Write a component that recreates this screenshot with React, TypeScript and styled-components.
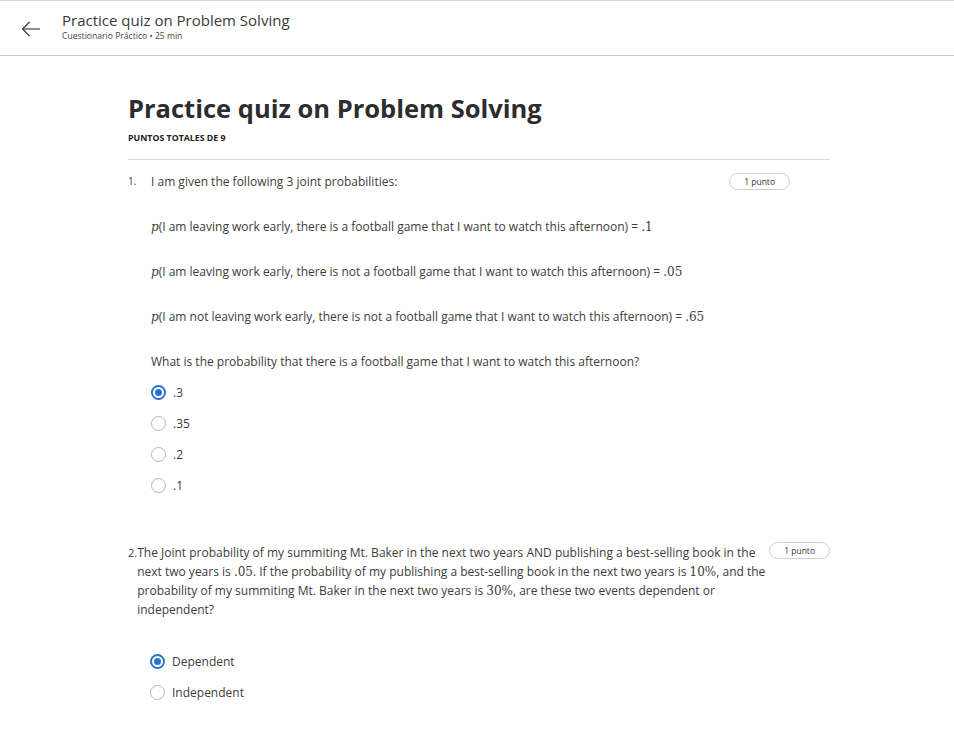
import React from "react";
import styled, { createGlobalStyle } from "styled-components";

const Global = createGlobalStyle`
  html, body { margin: 0; padding: 0; background: #fff; }
  body { font-family: "Open Sans", "Noto Sans", sans-serif; color: #373a3c; }
  * { box-sizing: border-box; }
`;

const Page = styled.div`
  width: 954px;
  min-height: 741px;
  background: #fff;
`;

const Header = styled.header`
  height: 56px;
  border-top: 1px solid #d9d9d9;
  border-bottom: 1px solid #c8c8c8;
  display: flex;
  align-items: center;
`;

const BackButton = styled.div`
  width: 62px;
  display: flex;
  justify-content: center;
  padding-top: 2px;
`;

const HeaderText = styled.div`
  display: flex;
  flex-direction: column;
  margin-top: -3px;
`;

const HeaderTitle = styled.div`
  font-size: 15px;
  color: #3a3a3a;
  line-height: 20px;
`;

const HeaderSub = styled.div`
  font-size: 8.6px;
  color: #444;
  line-height: 13px;
`;

const Main = styled.main`
  width: 702px;
  margin-left: 128px;
  padding-top: 34px;
`;

const Title = styled.h1`
  margin: 0;
  font-size: 25.5px;
  font-weight: 700;
  color: #2b2d2f;
  line-height: 36px;
`;

const Points = styled.div`
  margin-top: 6px;
  font-size: 8.8px;
  font-weight: 700;
  color: #222;
  line-height: 12px;
`;

const Divider = styled.hr`
  margin: 15px 0 0;
  border: none;
  border-top: 1px solid #dcdcdc;
`;

const Question = styled.section<{ $top: number }>`
  margin-top: ${(p) => p.$top}px;
`;

const QHead = styled.div<{ $right?: number }>`
  display: flex;
  align-items: flex-start;
  justify-content: space-between;
  padding-right: ${(p) => p.$right ?? 0}px;
`;

const QLabel = styled.div`
  display: flex;
  font-size: 12px;
  line-height: 19px;
  color: #3c3c3c;
`;

const QNum = styled.span<{ $w: number }>`
  flex: 0 0 ${(p) => p.$w}px;
  font-size: ${(p) => (p.$w > 15 ? 10 : 11)}px;
`;

const QText = styled.div<{ $w?: number }>`
  max-width: ${(p) => p.$w ?? 600}px;
`;

const Pill = styled.div<{ $mt: number }>`
  margin-top: ${(p) => p.$mt}px;
  height: 17px;
  padding: 0 14px;
  border: 1px solid #cfcfcf;
  border-radius: 9px;
  font-size: 8.5px;
  color: #333;
  display: flex;
  align-items: center;
  flex-shrink: 0;
`;

const Body = styled.div`
  padding-left: 23px;
`;

const Para = styled.p`
  margin: 26px 0 0;
  font-size: 12px;
  line-height: 19px;
  color: #3c3c3c;
`;

const M = styled.span`
  font-family: "DejaVu Serif", "Liberation Serif", serif;
  font-size: 12px;
  line-height: 1;
`;

const MI = styled(M)`
  font-style: italic;
`;

const Options = styled.div<{ $mt: number }>`
  margin-top: ${(p) => p.$mt}px;
  display: flex;
  flex-direction: column;
  gap: 12px;
`;

const Option = styled.label`
  display: flex;
  align-items: center;
  gap: 7px;
  height: 19px;
  font-size: 12px;
  color: #3c3c3c;
`;

const Radio = styled.span<{ $checked?: boolean }>`
  width: 15px;
  height: 15px;
  border-radius: 50%;
  border: ${(p) => (p.$checked ? "2px solid #2a73cc" : "1.5px solid #b5b5b5")};
  display: flex;
  align-items: center;
  justify-content: center;
  &::after {
    content: "";
    width: 7px;
    height: 7px;
    border-radius: 50%;
    background: ${(p) => (p.$checked ? "#2a73cc" : "transparent")};
  }
`;

const Q2Options = styled(Options)`
  padding-left: 22px;
`;

export default function App() {
  return (
    <Page>
      <Global />
      <Header>
        <BackButton>
          <svg width="20" height="16" viewBox="0 0 20 16" fill="none" stroke="#333" strokeWidth="1.1">
            <path d="M19 8H1.5" />
            <path d="M8.5 1L1.5 8l7 7" />
          </svg>
        </BackButton>
        <HeaderText>
          <HeaderTitle>Practice quiz on Problem Solving</HeaderTitle>
          <HeaderSub>Cuestionario Práctico • 25 min</HeaderSub>
        </HeaderText>
      </Header>
      <Main>
        <Title>Practice quiz on Problem Solving</Title>
        <Points>PUNTOS TOTALES DE 9</Points>
        <Divider />

        <Question $top={12}>
          <QHead $right={40}>
            <QLabel>
              <QNum $w={23}>1.</QNum>
              <QText>I am given the following 3 joint probabilities:</QText>
            </QLabel>
            <Pill $mt={1}>1 punto</Pill>
          </QHead>
          <Body>
            <Para>
              <MI>p</MI>(I am leaving work early, there is a football game that I want to watch this afternoon) = <M>.1</M>
            </Para>
            <Para>
              <MI>p</MI>(I am leaving work early, there is not a football game that I want to watch this afternoon) = <M>.05</M>
            </Para>
            <Para>
              <MI>p</MI>(I am not leaving work early, there is not a football game that I want to watch this afternoon) = <M>.65</M>
            </Para>
            <Para>What is the probability that there is a football game that I want to watch this afternoon?</Para>
            <Options $mt={12}>
              <Option><Radio $checked />.3</Option>
              <Option><Radio />.35</Option>
              <Option><Radio />.2</Option>
              <Option><Radio />.1</Option>
            </Options>
          </Body>
        </Question>

        <Question $top={48}>
          <QHead>
            <QLabel>
              <QNum $w={9}>2.</QNum>
              <QText $w={630}>
                The Joint probability of my summiting Mt. Baker in the next two years AND publishing a best-selling book in the next two years is <M>.05</M>. If the probability of my publishing a best-selling book in the next two years is <M>10%</M>, and the probability of my summiting Mt. Baker in the next two years is <M>30%</M>, are these two events dependent or independent?
              </QText>
            </QLabel>
            <Pill $mt={-1}>1 punto</Pill>
          </QHead>
          <Q2Options $mt={33}>
            <Option><Radio $checked />Dependent</Option>
            <Option><Radio />Independent</Option>
          </Q2Options>
        </Question>
      </Main>
    </Page>
  );
}
